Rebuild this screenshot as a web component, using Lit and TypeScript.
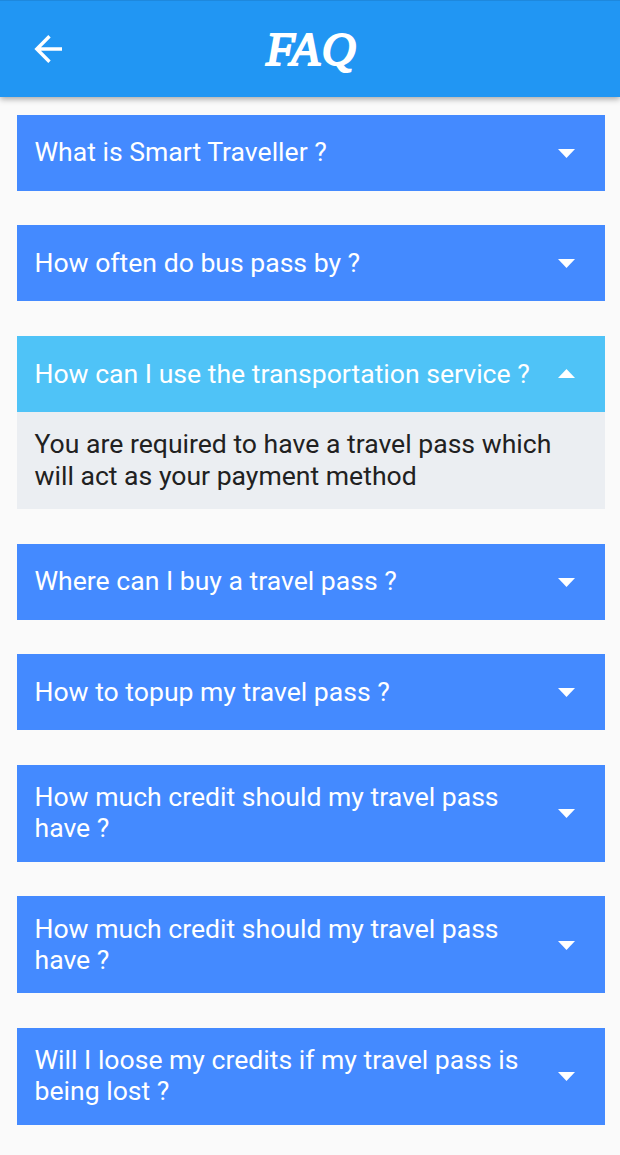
import { LitElement, html, css, svg } from "lit";
import { customElement } from "lit/decorators.js";

interface Entry { q: string[]; a?: string[] }

const entries: Entry[] = [
  { q: ["What is Smart Traveller ?"] },
  { q: ["How often do bus pass by ?"] },
  { q: ["How can I use the transportation service ?"], a: ["You are required to have a travel pass which", "will act as your payment method"] },
  { q: ["Where can I buy a travel pass ?"] },
  { q: ["How to topup my travel pass ?"] },
  { q: ["How much credit should my travel pass", "have ?"] },
  { q: ["How much credit should my travel pass", "have ?"] },
  { q: ["Will I loose my credits if my travel pass is", "being lost ?"] },
];

@customElement("app-root")
export class AppRoot extends LitElement {
  static styles = css`
    :host { display: block; height: 1155px; overflow: hidden; background: #fafafa; font-family: Roboto, sans-serif; }
    .bar { position: relative; z-index: 1; box-sizing: border-box; height: 97px; background: #2196f3; display: grid; grid-template-columns: 97px 1fr 97px; align-items: center; box-shadow: 0 2px 6px rgba(0,0,0,.35); border-top: 1px solid #1e88dd; }
    .back { display: block; margin-left: 34px; }
    .title { margin: 0; padding: 0 0 1px 4px; text-align: center; color: #fff; font: italic 400 47px/60px "Liberation Serif", serif; letter-spacing: 2px; -webkit-text-stroke: 2.2px #fff; stroke-linejoin: round; }
    .list { display: flex; flex-direction: column; gap: 34.7px; padding: 17.7px 15.5px 0 17px; }
    .head { box-sizing: border-box; display: flex; align-items: center; justify-content: space-between; min-height: 76px; padding: 16.4px 29.5px 18.2px 17.5px; background: #448aff; color: #fff; }
    .head.open { background: #4fc3f7; }
    .text { font-size: 26.58px; line-height: 31.1px; white-space: nowrap; }
    .line { display: block; }
    .body { padding: 16.4px 17.5px 18.2px; background: #ebeef2; color: #212121; }
    .caret { display: block; flex: none; margin-top: 3px; }
    .open .caret { margin-top: 0; }
  `;
  render() {
    return html`
      <header class="bar">
        <svg class="back" width="29" height="28" viewBox="0 0 29 28" fill="none" stroke="#fff" stroke-width="3.4"><path d="M28 14H3M15.5 1.3L2.8 14L15.5 26.7"/></svg>
        <h1 class="title">FAQ</h1>
      </header>
      <main class="list">
        ${entries.map((e) => html`<section>
          <div class="head ${e.a ? "open" : ""}">
            <div class="text">${e.q.map((l) => html`<span class="line">${l}</span>`)}</div>
            <svg class="caret" width="17" height="9" viewBox="0 0 17 9">${e.a ? svg`<path fill="#fff" d="M0 9L8.5 0L17 9Z"/>` : svg`<path fill="#fff" d="M0 0H17L8.5 9Z"/>`}</svg>
          </div>
          ${e.a ? html`<div class="body text">${e.a.map((l) => html`<span class="line">${l}</span>`)}</div>` : ""}
        </section>`)}
      </main>`;
  }
}
